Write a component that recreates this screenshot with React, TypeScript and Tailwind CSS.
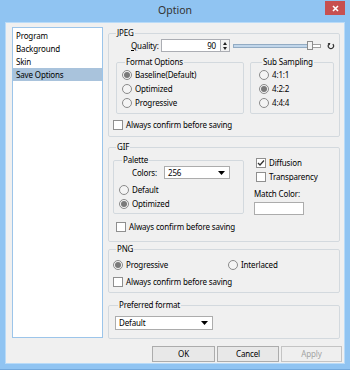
import React from "react";

function Radio({ checked, label, className = "" }: { checked?: boolean; label: string; className?: string }) {
  return (
    <div className={"flex items-center h-[14px] " + className}>
      <span className="w-[10px] h-[10px] rounded-full border border-[#8a8a8a] bg-[#f4f4f4] flex items-center justify-center shrink-0">
        {checked && <span className="w-[6px] h-[6px] rounded-full bg-[#7a7a7a]" />}
      </span>
      <span className="ml-[3px] whitespace-nowrap">{label}</span>
    </div>
  );
}

function Check({ checked, label, className = "" }: { checked?: boolean; label: string; className?: string }) {
  return (
    <div className={"flex items-center h-[14px] " + className}>
      <span className="w-[10px] h-[10px] border border-[#8f8f8f] bg-white flex items-center justify-center shrink-0">
        {checked && (
          <svg width="8" height="8" viewBox="0 0 8 8">
            <path d="M1 4 L3 6 L7 1.5" fill="none" stroke="#333" strokeWidth="1.3" />
          </svg>
        )}
      </span>
      <span className="ml-[3px] whitespace-nowrap">{label}</span>
    </div>
  );
}

function Group({ title, className = "", children }: { title: string; className?: string; children?: React.ReactNode }) {
  return (
    <fieldset className={"border border-[#d3d9de] rounded-[2px] " + className}>
      <legend className="ml-[3px] px-[1px] leading-[12px] text-black">{title}</legend>
      {children}
    </fieldset>
  );
}

function Combo({ value, className = "" }: { value: string; className?: string }) {
  return (
    <div className={"flex items-center bg-white border border-[#acacac] " + className}>
      <span className="pl-[3px] flex-1 leading-[12px]">{value}</span>
      <svg width="7" height="4" viewBox="0 0 7 4" className="mr-[4px]">
        <path d="M0 0 H7 L3.5 4 Z" fill="#000" />
      </svg>
    </div>
  );
}

export default function App() {
  return (
    <div className="w-[350px] h-[370px] bg-[#90c4f2] relative overflow-hidden border-b border-[#74a9dc] font-['Noto_Sans',sans-serif] text-[8px] tracking-[-0.15px] text-black">
      <div className="h-[22px] flex items-center justify-center text-[10.5px] tracking-normal text-[#333]">Option</div>
      <div className="absolute right-[5px] top-[1px] w-[20px] h-[14px] bg-[#c75050] flex items-center justify-center">
        <svg width="7" height="7" viewBox="0 0 7 7">
          <path d="M1 1 L6 6 M6 1 L1 6" stroke="#fff" strokeWidth="1.6" />
        </svg>
      </div>
      <div className="ml-[5px] w-[340px] h-[342px] bg-[#f0f0f0] border border-[#b9dbf8] flex pl-[6px]">
        <div className="mt-[4px] w-[91px] h-[311px] bg-white border border-[#9cc5ea] pt-[1px]">
          <div className="h-[13px] pl-[3px] leading-[13px]">Program</div>
          <div className="h-[13px] pl-[3px] leading-[13px]">Background</div>
          <div className="h-[13px] pl-[3px] leading-[13px]">Skin</div>
          <div className="h-[13px] pl-[3px] leading-[13px] bg-[#a9c3dc]">Save Options</div>
        </div>
        <div className="ml-[5px] w-[233px] flex flex-col">
          {/* JPEG */}
          <Group title="JPEG" className="mt-[4px] w-[232px] h-[110px] px-[4px]">
            <div className="flex items-center h-[13px]">
              <span className="ml-[18px] w-[27px] leading-[12px]"><span className="underline">Q</span>uality:</span>
              <div className="ml-[3px] w-[60px] h-[13px] bg-white border border-[#abadb3] flex items-center justify-end pr-[4px]">90</div>
              <div className="w-[9px] h-[13px] border border-l-0 border-[#abadb3] bg-[#f2f2f2] flex flex-col items-center justify-center gap-[2px]">
                <svg width="4" height="3" viewBox="0 0 4 3"><path d="M0 3 L2 0 L4 3 Z" fill="#222" /></svg>
                <svg width="4" height="3" viewBox="0 0 4 3"><path d="M0 0 L4 0 L2 3 Z" fill="#222" /></svg>
              </div>
              <div className="ml-[3px] flex items-center relative w-[88px] h-[13px]">
                <div className="w-[75px] h-[4px] bg-[#c1d6ea] border border-[#92abc3]" />
                <div className="w-[13px] h-[4px] bg-white border border-[#a0a0a0]" />
                <div className="absolute left-[74px] top-[2px] w-[6px] h-[9px] bg-[#f3f3f3] border border-[#8c8c8c]" />
              </div>
              <svg width="8" height="8" viewBox="0 0 8 8" className="ml-[6px]">
                <path d="M2 2.2 A2.6 2.6 0 1 0 5.8 2.2" fill="none" stroke="#333" strokeWidth="1.2" />
                <path d="M0.6 1 L3.4 1 L2.6 3.6 Z" fill="#333" />
              </svg>
            </div>
            <div className="flex mt-[4px] ml-[3px]">
              <Group title="Format Options" className="w-[128px] h-[58px] pl-[5px]">
                <Radio checked label="Baseline(Default)" />
                <Radio label="Optimized" />
                <Radio label="Progressive" />
              </Group>
              <Group title="Sub Sampling" className="ml-[6px] w-[84px] h-[58px] pl-[8px]">
                <Radio label="4:1:1" />
                <Radio checked label="4:2:2" />
                <Radio label="4:4:4" />
              </Group>
            </div>
            <Check label="Always confirm before saving" className="mt-[4px]" />
          </Group>

          {/* GIF */}
          <Group title="GIF" className="mt-[4px] w-[232px] h-[101px] px-[4px]">
            <div className="flex mt-[1px]">
              <Group title="Palette" className="w-[131px] h-[60px] pl-[5px]">
                <div className="flex items-center h-[13px]">
                  <span className="ml-[13px] w-[28px]">Colors:</span>
                  <Combo value="256" className="ml-[4px] w-[66px] h-[13px]" />
                </div>
                <Radio label="Default" className="mt-[4px]" />
                <Radio checked label="Optimized" />
              </Group>
              <div className="ml-[10px] flex flex-col">
                <Check checked label="Diffusion" className="mt-[2px] ml-[2px]" />
                <Check label="Transparency" className="ml-[2px]" />
                <div className="mt-[3px] h-[14px] leading-[14px]">Match Color:</div>
                <div className="mt-[1px] w-[50px] h-[13px] bg-white border border-[#acacac]" />
              </div>
            </div>
            <Check label="Always confirm before saving" className="mt-[5px] ml-[3px]" />
          </Group>

          {/* PNG */}
          <Group title="PNG" className="mt-[1px] w-[232px] h-[50px] px-[4px]">
            <div className="flex mt-[3px]">
              <Radio checked label="Progressive" className="w-[115px]" />
              <Radio label="Interlaced" />
            </div>
            <Check label="Always confirm before saving" className="mt-[3px]" />
          </Group>

          {/* Preferred */}
          <Group title="Preferred format" className="mt-[6px] w-[232px] h-[40px] px-[6px]">
            <Combo value="Default" className="mt-[5px] w-[98px] h-[14px]" />
          </Group>

          <div className="mt-[7px] flex justify-end gap-[2px] w-[234px]">
            <div className="w-[63px] h-[16px] border border-[#acacac] bg-[#e8e8e8] flex items-center justify-center">OK</div>
            <div className="w-[62px] h-[16px] border border-[#acacac] bg-[#e8e8e8] flex items-center justify-center">Cancel</div>
            <div className="w-[61px] h-[16px] border border-[#c4c4c4] bg-[#efefef] flex items-center justify-center text-[#a3a3a3]">Apply</div>
          </div>
        </div>
      </div>
    </div>
  );
}
